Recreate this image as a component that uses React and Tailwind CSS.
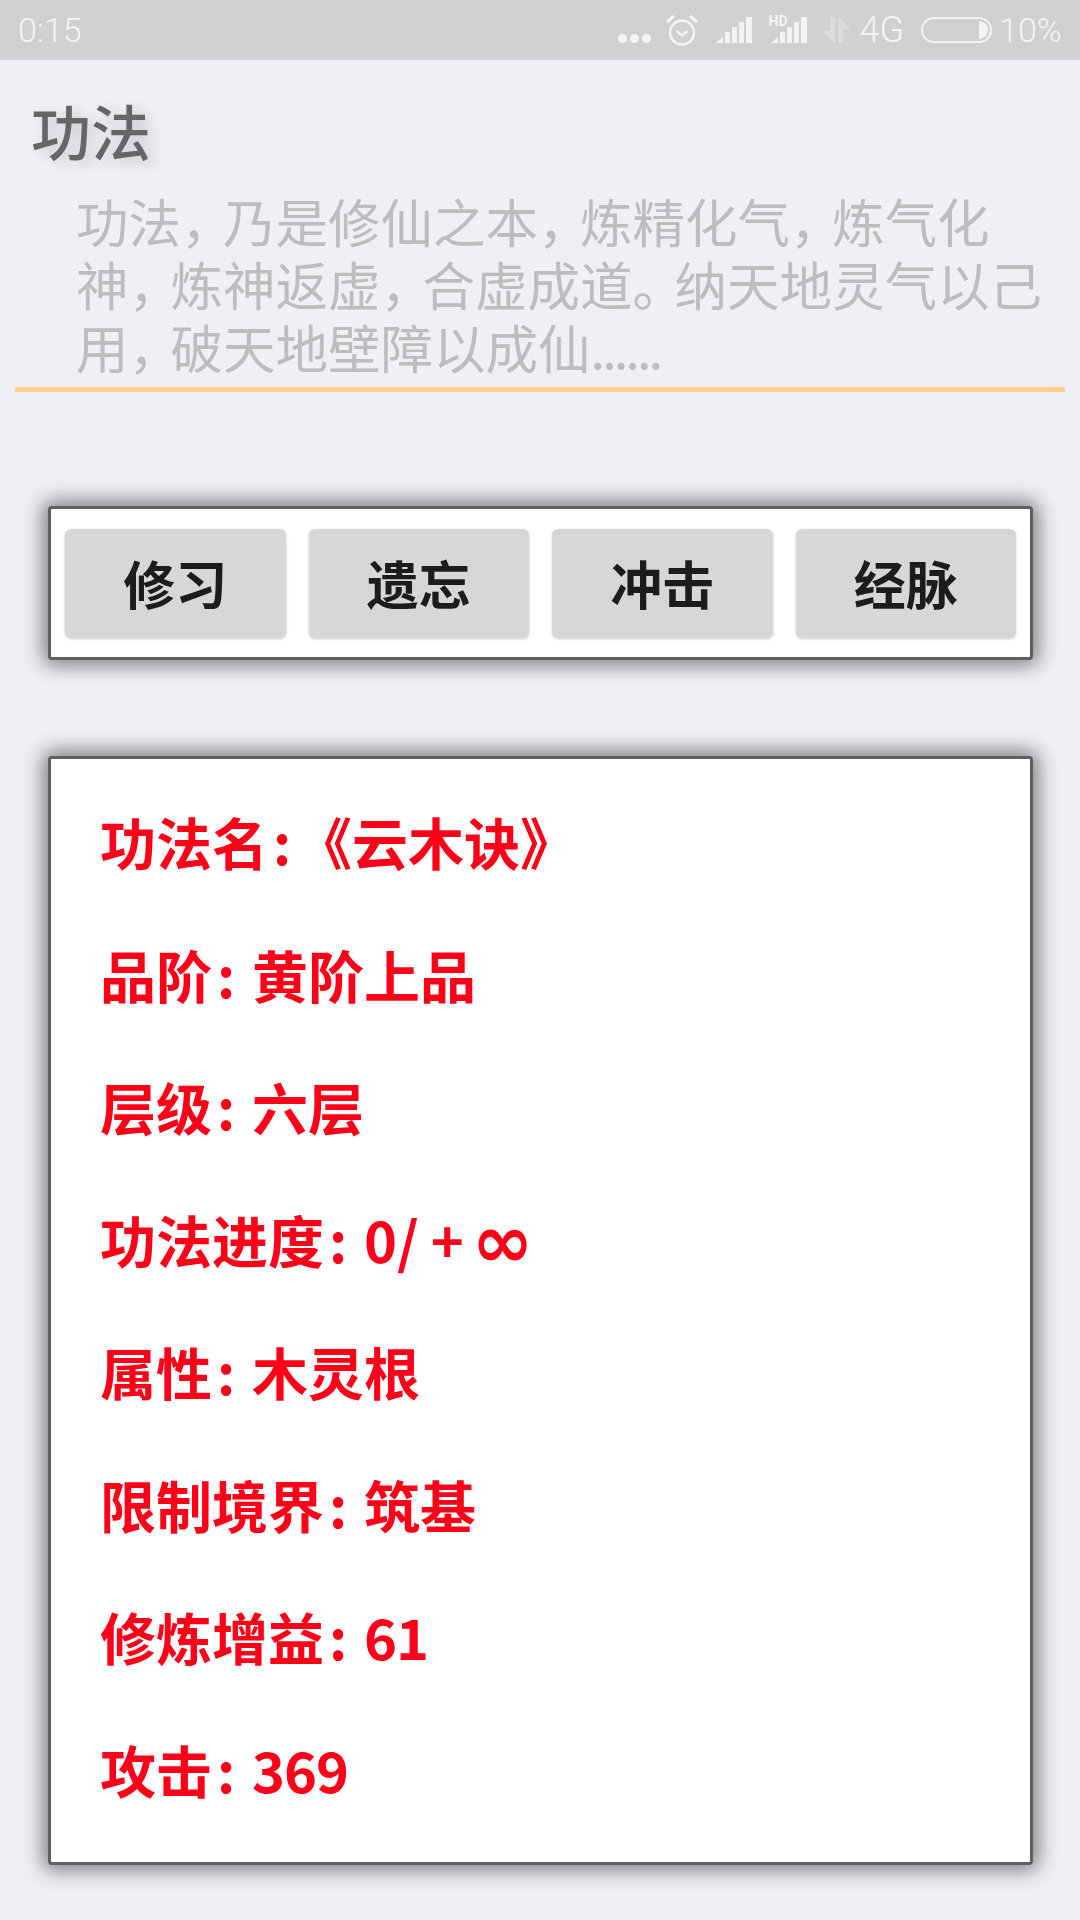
const cjk = { fontFamily: '"Noto Sans CJK SC", "Noto Sans", sans-serif' };

const rows = [
  { label: '功法名', value: '《云木诀》', tight: true },
  { label: '品阶', value: '黄阶上品' },
  { label: '层级', value: '六层' },
  { label: '功法进度', value: <Progress /> },
  { label: '属性', value: '木灵根' },
  { label: '限制境界', value: '筑基' },
  { label: '修炼增益', value: '61', num: true },
  { label: '攻击', value: '369', num: true },
];

function Progress() {
  return (
    <>
      0/
      <span className="ml-[12px]">+</span>
      <span className="ml-[8px] text-[74px] leading-[56px] align-[-4px] font-['DejaVu_Sans']">∞</span>
    </>
  );
}

// punctuation in the reference sits in a narrower cell than the glyphs
const P = ({ c }) => <span className="tracking-[-10.5px]">{c}</span>;

const SignalBars = () => (
  <svg width="37" height="26" viewBox="0 0 37 26" fill="#f4f4f4">
    <polygon points="0,26 7,26 7,20" />
    <rect x="9" y="15" width="5" height="11" />
    <rect x="16" y="10" width="5" height="16" />
    <rect x="23" y="5" width="5" height="21" />
    <rect x="30" y="0" width="6" height="26" />
  </svg>
);

const StatusBar = () => (
  <div className="h-[60px] bg-[#d0d0d0] flex items-center justify-between pl-[18px] pr-[18px] text-[#f4f4f4]" style={{ fontFamily: 'Roboto, sans-serif' }}>
    <span className="text-[34px] font-light leading-none">0:15</span>
    <div className="flex items-center h-full">
      <div className="flex gap-[3px] mt-[17px]">
        <span className="w-[9px] h-[9px] rounded-full bg-[#f4f4f4]" />
        <span className="w-[9px] h-[9px] rounded-full bg-[#f4f4f4]" />
        <span className="w-[9px] h-[9px] rounded-full bg-[#f4f4f4]" />
      </div>
      <svg className="ml-[15px]" width="32" height="32" viewBox="0 0 32 32" fill="none" stroke="#f4f4f4" strokeWidth="2.5">
        <circle cx="16" cy="18.5" r="12" />
        <path d="M10.5 17 L16 21.5 L21.5 17" />
        <path d="M1 8 L8 2 M31 8 L24 2" strokeWidth="3" />
      </svg>
      <div className="ml-[18px]"><SignalBars /></div>
      <div className="relative ml-[18px]">
        <span className="absolute left-[-2px] top-[-3px] text-[14px] font-bold leading-none">HD</span>
        <SignalBars />
      </div>
      <svg className="ml-[14px]" width="29" height="26" viewBox="0 0 29 26" fill="#dcdcdc">
        <polygon points="8,0 13,0 13,26 0,14 8,14" />
        <polygon points="16,26 21,26 21,12 29,12 16,0" />
      </svg>
      <span className="ml-[9px] text-[36px] font-light leading-none">4G</span>
      <div className="ml-[17px] w-[71px] h-[26px] rounded-[13px] border-2 border-[#f4f4f4] flex justify-end items-center pr-[2px]">
        <span className="w-[9px] h-[18px] bg-[#f4f4f4] rounded-r-[9px]" />
      </div>
      <span className="ml-[7px] text-[34px] font-light leading-none">10%</span>
    </div>
  </div>
);

export default function App() {
  return (
    <div className="w-[1080px] h-[1920px] overflow-hidden bg-[#efeff4]" style={cjk}>
      <StatusBar />

      {/* intro */}
      <div className="mx-[15px] h-[332px] border-b-[5px] border-[#fbd28c]">
        <h1 className="pt-[32px] pl-[16px] text-[60px] leading-[76px] font-medium text-[#666666] [text-shadow:6px_4px_14px_rgba(0,0,0,0.18)]">功法</h1>
        <div className="mt-[21px] pl-[61px] text-[52.5px] leading-[63px] text-[#bdbdbf] whitespace-nowrap">
          <div>功法<P c="，" />乃是修仙之本<P c="，" />炼精化气<P c="，" />炼气化</div>
          <div>神<P c="，" />炼神返虚<P c="，" />合虚成道<P c="。" />纳天地灵气以己</div>
          <div>用<P c="，" />破天地壁障以成仙<span className="tracking-[-3px]">......</span></div>
        </div>
      </div>

      {/* actions */}
      <div className="mt-[114px] ml-[48px] mr-[47px] h-[154px] bg-white border-[3px] border-[#5f5f5f] rounded-[4px] shadow-[0_0_20px_5px_rgba(50,50,50,0.6)] flex items-center gap-[23px] px-[14px]">
        {['修习', '遗忘', '冲击', '经脉'].map((t) => (
          <div key={t} className="flex-1 h-[109px] bg-[#d6d8d8] rounded-[6px] shadow-[0_1px_3px_rgba(0,0,0,0.2)] flex items-center justify-center text-[52px] font-bold text-[#1c1c1c]">
            {t}
          </div>
        ))}
      </div>

      {/* details */}
      <div className="mt-[96px] ml-[48px] mr-[47px] h-[1109px] bg-white border-[3px] border-[#5f5f5f] rounded-[4px] shadow-[0_0_20px_5px_rgba(50,50,50,0.6)] pl-[49px] pt-[16px]">
        {rows.map((r) => (
          <div key={r.label} className="h-[132.5px] flex items-center text-[56px] font-bold text-[#ff0019] whitespace-nowrap">
            <span>{r.label}</span>
            <span className="w-[28px] text-center">:</span>
            <span className={`${r.tight ? '' : 'ml-[12px]'} ${r.num ? 'tracking-[-1px]' : ''}`}>{r.value}</span>
          </div>
        ))}
      </div>
    </div>
  );
}
